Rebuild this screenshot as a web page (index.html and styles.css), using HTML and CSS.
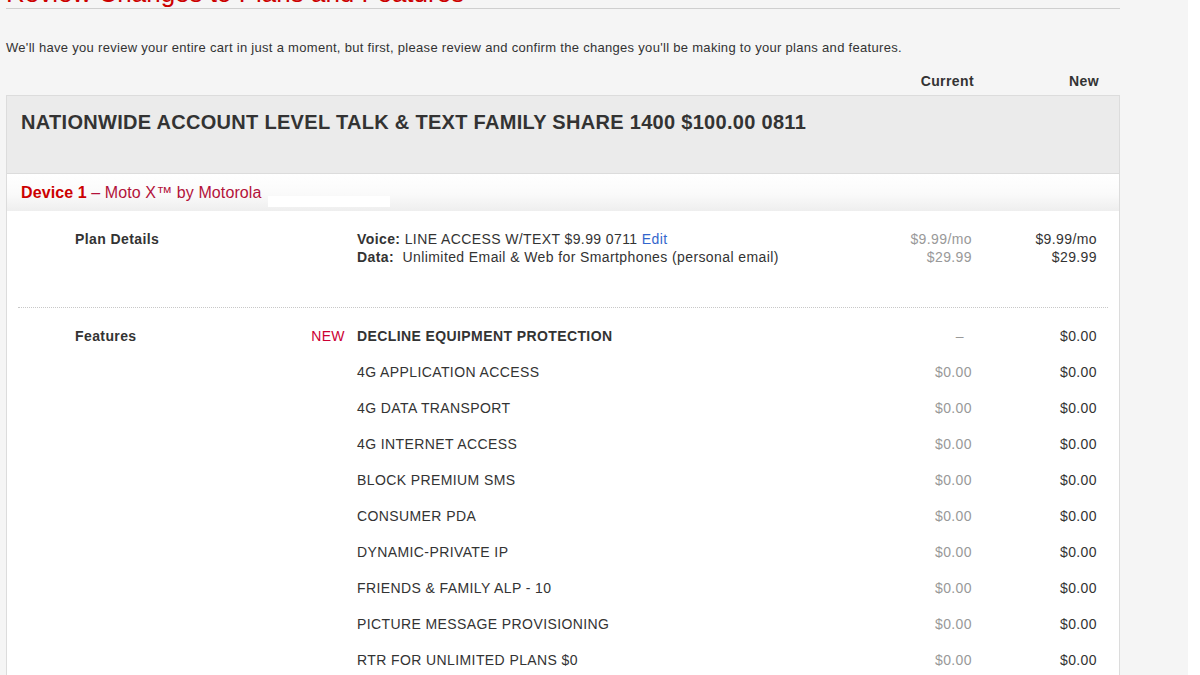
FILE: index.html
```html
<!DOCTYPE html>
<html>
<head>
<meta charset="utf-8">
<link rel="stylesheet" href="styles.css">
</head>
<body>
<div class="page">
  <h1 class="title">Review Changes to Plans and Features</h1>
  <p class="intro">We'll have you review your entire cart in just a moment, but first, please review and confirm the changes you'll be making to your plans and features.</p>
  <div class="cols-head">
    <span></span><span></span><span></span>
    <span class="cur">Current</span>
    <span class="new">New</span>
  </div>
  <div class="card">
    <div class="card-head">NATIONWIDE ACCOUNT LEVEL TALK &amp; TEXT FAMILY SHARE 1400 $100.00 0811</div>
    <div class="device">
      <span class="dev-num">Device 1</span><span class="dev-name"> – Moto X™ by Motorola</span><span class="redact"></span>
    </div>
    <div class="plan row">
      <span class="label">Plan Details</span>
      <span></span>
      <span class="desc"><b>Voice:</b> LINE ACCESS W/TEXT $9.99 0711 <a class="edit">Edit</a><br><b>Data:</b>&nbsp; Unlimited Email &amp; Web for Smartphones (personal email)</span>
      <span class="cur">$9.99/mo<br>$29.99</span>
      <span class="new">$9.99/mo<br>$29.99</span>
    </div>
    <div class="sep"></div>
    <div class="features">
      <div class="row frow"><span class="label">Features</span><span class="badge">NEW</span><span class="desc strong">DECLINE EQUIPMENT PROTECTION</span><span class="cur dash">–</span><span class="new">$0.00</span></div>
      <div class="row frow"><span></span><span></span><span class="desc">4G APPLICATION ACCESS</span><span class="cur">$0.00</span><span class="new">$0.00</span></div>
      <div class="row frow"><span></span><span></span><span class="desc">4G DATA TRANSPORT</span><span class="cur">$0.00</span><span class="new">$0.00</span></div>
      <div class="row frow"><span></span><span></span><span class="desc">4G INTERNET ACCESS</span><span class="cur">$0.00</span><span class="new">$0.00</span></div>
      <div class="row frow"><span></span><span></span><span class="desc">BLOCK PREMIUM SMS</span><span class="cur">$0.00</span><span class="new">$0.00</span></div>
      <div class="row frow"><span></span><span></span><span class="desc">CONSUMER PDA</span><span class="cur">$0.00</span><span class="new">$0.00</span></div>
      <div class="row frow"><span></span><span></span><span class="desc">DYNAMIC-PRIVATE IP</span><span class="cur">$0.00</span><span class="new">$0.00</span></div>
      <div class="row frow"><span></span><span></span><span class="desc">FRIENDS &amp; FAMILY ALP - 10</span><span class="cur">$0.00</span><span class="new">$0.00</span></div>
      <div class="row frow"><span></span><span></span><span class="desc">PICTURE MESSAGE PROVISIONING</span><span class="cur">$0.00</span><span class="new">$0.00</span></div>
      <div class="row frow"><span></span><span></span><span class="desc">RTR FOR UNLIMITED PLANS $0</span><span class="cur">$0.00</span><span class="new">$0.00</span></div>
    </div>
  </div>
</div>
</body>
</html>
```

FILE: styles.css
```css
html {
  background: #fff;
  overflow: hidden;
}
body {
  margin: 0;
  width: 1188px;
  height: 675px;
  overflow: hidden;
  background: #f5f5f5;
  font-family: "Liberation Sans", Arial, sans-serif;
  color: #333;
}
.page {
  margin-left: 6px;
  width: 1114px;
}
.title {
  margin: -22px 0 0;
  font-size: 26px;
  line-height: 30px;
  font-weight: normal;
  color: #cc0000;
  border-bottom: 1px solid #cfcfcf;
}
.intro {
  margin: 31px 0 0;
  font-size: 13px;
  line-height: 16px;
  letter-spacing: 0.3px;
  color: #333;
}
.cols-head,
.row {
  display: grid;
  grid-template-columns: 232px 50px 1fr 120px 125px;
  padding: 0 22px 0 68px;
}
.cols-head {
  margin-top: 17px;
  padding-right: 21px;
  font-size: 14px;
  line-height: 17px;
  letter-spacing: 0.4px;
  font-weight: bold;
  color: #333;
  height: 22px;
}
.cur, .new {
  text-align: right;
}
.card {
  border: 1px solid #dcdcdc;
  background: #fff;
}
.card-head {
  height: 63px;
  padding: 14px 14px 0;
  background: #ebebeb;
  border-bottom: 1px solid #dcdcdc;
  font-size: 20px;
  line-height: 24px;
  letter-spacing: 0.3px;
  font-weight: bold;
  color: #333;
}
.device {
  display: flex;
  align-items: center;
  height: 37px;
  padding-left: 14px;
  background: linear-gradient(#ffffff 0%, #fafafa 55%, #eeeeee 100%);
  font-size: 16px;
  letter-spacing: 0.1px;
}
.dev-num {
  font-weight: bold;
  color: #c00;
}
.dev-name {
  color: #b3123a;
  white-space: pre;
}
.redact {
  display: inline-block;
  align-self: flex-end;
  width: 122px;
  height: 11px;
  margin: 0 0 4px 7px;
  background: #fff;
}
.row {
  font-size: 14px;
  line-height: 18px;
  letter-spacing: 0.4px;
}
.plan {
  padding-top: 19px;
  padding-bottom: 41px;
}
.label {
  font-weight: bold;
}
.desc b {
  font-weight: bold;
}
.plan .cur {
  color: #999;
}
.edit {
  color: #3366cc;
  text-decoration: none;
}
.sep {
  margin: 0 11px;
  border-top: 1px dotted #c8c8c8;
}
.features {
  padding-top: 10px;
}
.frow {
  line-height: 36px;
}
.badge {
  color: #cc0033;
  text-align: right;
  padding-right: 12px;
}
.strong {
  font-weight: bold;
}
.frow .cur {
  color: #999;
}
.frow .dash {
  padding-right: 8px;
}
```
